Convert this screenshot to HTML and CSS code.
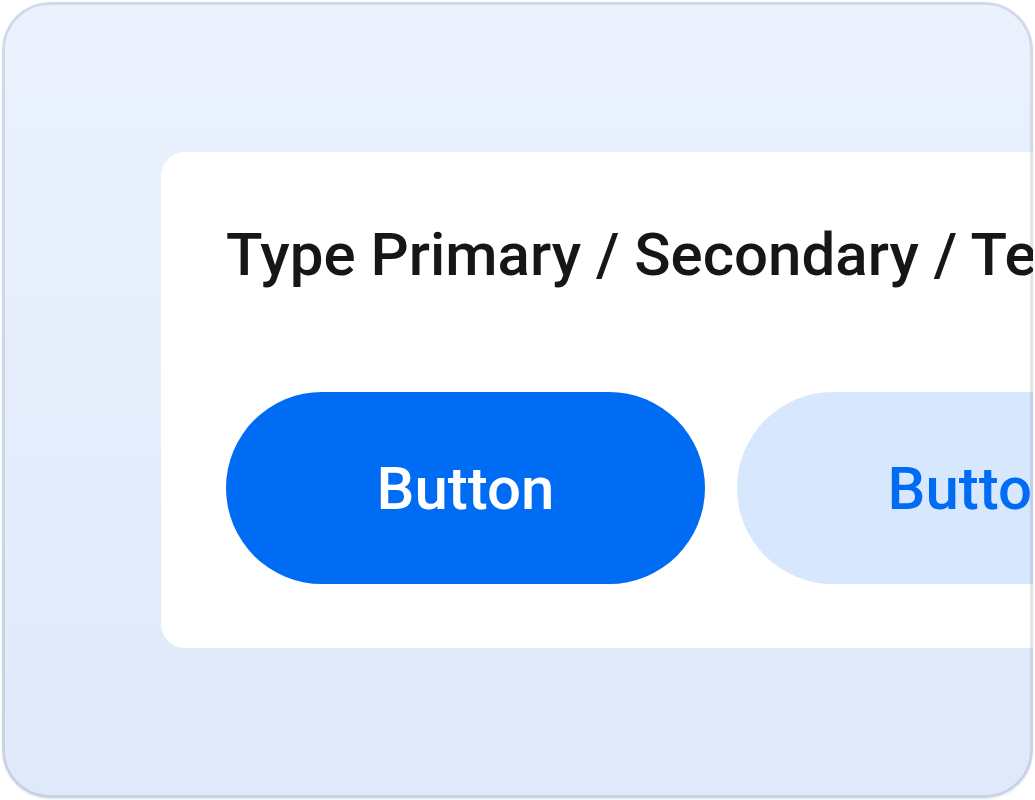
FILE: index.html
```html
<!DOCTYPE html>
<html lang="en">
<head>
  <meta charset="UTF-8" />
  <meta name="viewport" content="width=device-width, initial-scale=1.0"/>
  <title>Button Types</title>
  <link rel="stylesheet" href="styles.css">
</head>
<body>
  <div class="frame">
    <div class="card">
      <h2 class="card-title">Type Primary / Secondary / Tertiary</h2>
      <div class="button-row">
        <button class="btn btn-primary">Button</button>
        <button class="btn btn-secondary">Button</button>
        <button class="btn btn-tertiary">Button</button>
      </div>
    </div>
  </div>
</body>
</html>
```

FILE: styles.css
```css
body {
  margin: 0;
  padding: 0;
  background: #fff;
  font-family: Roboto, 'Noto Sans', sans-serif;
}
.frame {
  position: relative;
  margin: 2px;
  height: 796px;
  border-radius: 48px;
  overflow: hidden;
  background: linear-gradient(180deg, #ebf2fe 0%, #dfe9f9 100%);
  box-shadow: 0 1px 2px rgba(40, 60, 100, 0.12);
}
.frame::after {
  content: "";
  position: absolute;
  inset: 0;
  border: 3px solid rgba(30, 50, 90, 0.12);
  border-radius: inherit;
  pointer-events: none;
}
.card {
  width: max-content;
  margin: 150px 0 0 159px;
  padding: 69px 65px 64px 65px;
  background: #fff;
  border-radius: 24px;
}
.card-title {
  margin: 0 0 103px;
  font-size: 60px;
  line-height: 68px;
  font-weight: 500;
  color: #161616;
  white-space: nowrap;
}
.button-row {
  display: flex;
  gap: 32px;
}
.btn {
  display: flex;
  align-items: center;
  justify-content: center;
  width: 479px;
  height: 192px;
  border: none;
  border-radius: 96px;
  font-family: Roboto, 'Noto Sans', sans-serif;
  font-size: 60px;
  font-weight: 500;
  cursor: pointer;
}
.btn-primary {
  background: #006cf3;
  color: #fff;
}
.btn-secondary {
  background: #d6e7fe;
  color: #006cf3;
}
.btn-tertiary {
  background: transparent;
  color: #006cf3;
}
```
